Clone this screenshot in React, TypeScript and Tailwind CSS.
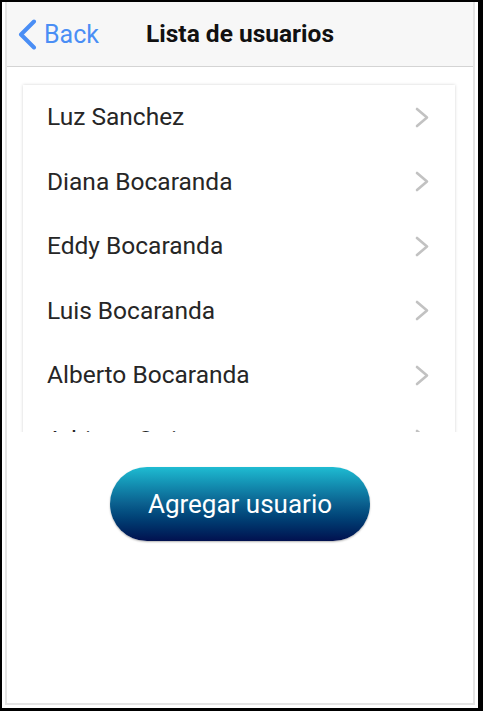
const users = [
  'Luz Sanchez',
  'Diana Bocaranda',
  'Eddy Bocaranda',
  'Luis Bocaranda',
  'Alberto Bocaranda',
  'Adriana Ortiz',
];

function Chevron() {
  return (
    <svg width="14" height="21" viewBox="0 0 14 21" fill="none">
      <path
        d="M2 2 L12 10.5 L2 19"
        stroke="#c2c2c2"
        strokeWidth="2.6"
        strokeLinecap="round"
        strokeLinejoin="round"
      />
    </svg>
  );
}

export default function App() {
  return (
    <div
      className="w-[483px] h-[711px] bg-black pl-[2px] pt-[2px] pr-[5px] pb-[3px]"
      style={{ fontFamily: 'Roboto, "Noto Sans", sans-serif' }}
    >
      <div className="h-full bg-white flex px-[3px] pb-[3px]">
        <div className="flex-1 flex flex-col border-x-2 border-b-2 border-[#e4e4e4]">
          {/* header */}
          <div className="h-[65px] shrink-0 bg-[#f7f7f7] border-b border-[#d4d4d4] grid grid-cols-[1fr_auto_1fr] items-center">
            <button className="flex items-center gap-[7px] pl-[10px] text-[#4a8ef5] text-[25px] leading-none">
              <svg width="20" height="31" viewBox="0 0 20 31" fill="none">
                <path
                  d="M17 2.5 L4 15.5 L17 28.5"
                  stroke="#4a8ef5"
                  strokeWidth="4"
                  strokeLinecap="round"
                  strokeLinejoin="round"
                />
              </svg>
              Back
            </button>
            <h1 className="text-[24.5px] font-bold text-[#111] leading-none">Lista de usuarios</h1>
            <div />
          </div>

          <div className="mt-[15px] ml-[13px] w-[438px] h-[350px] shrink-0 overflow-hidden pt-[3px] px-[3px]">
            <div className="bg-white shadow-[0_0_3px_rgba(0,0,0,0.18)]">
              {users.map((name) => (
                <div
                  key={name}
                  className="h-[64.5px] flex items-center justify-between pl-[24px] pr-[26px]"
                >
                  <span className="text-[24.5px] text-[#262626] leading-none">{name}</span>
                  <Chevron />
                </div>
              ))}
            </div>
          </div>

          <button className="mt-[35px] mx-auto w-[260px] h-[74px] shrink-0 flex items-center justify-center rounded-full bg-gradient-to-b from-[#1fbcd2] via-[#0b5f8e] to-[#02104f] text-white text-[26px] leading-normal shadow-[0_1px_2px_rgba(0,0,0,0.3)]">
            Agregar usuario
          </button>
        </div>
      </div>
    </div>
  );
}
